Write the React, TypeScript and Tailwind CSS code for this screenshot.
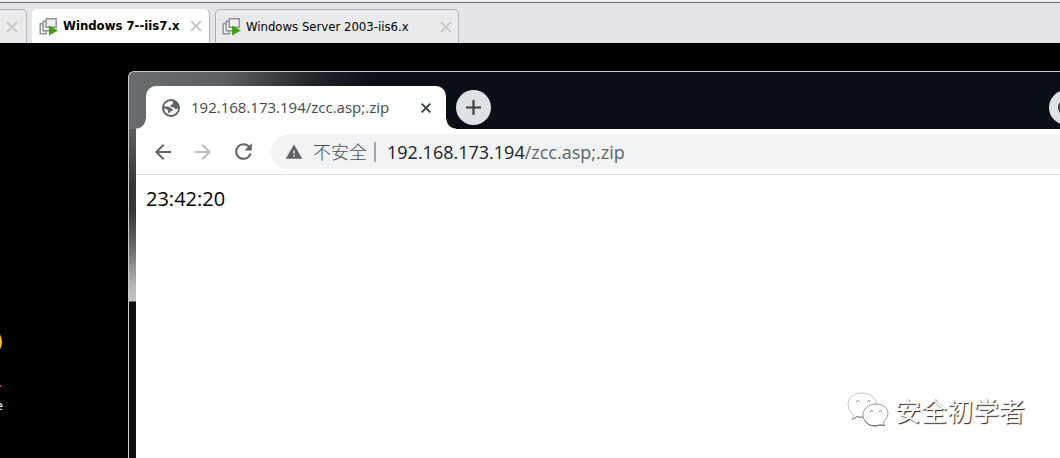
import { MdArrowBack, MdArrowForward, MdRefresh, MdWarning } from "react-icons/md";

function VmIcon() {
  return (
    <svg viewBox="0 0 19 19" className="size-[19px] shrink-0" aria-hidden="true">
      <g fill="#f0f1f2" stroke="#8d9093" strokeWidth="1.4">
        <path d="M1.200 6.700h6v10h-6z" />
        <path d="M4.200 4.200h7v9.500h-7z" />
        <path d="M7.200 1.700h10v8.500h-10z" />
      </g>
      <path d="M10 8.500l9 5-9 5z" fill="#43a012" />
    </svg>
  );
}

function GlobeIcon() {
  return (
    <svg viewBox="0 0 18 18" className="size-[18px] shrink-0" aria-hidden="true">
      <circle cx="9" cy="9" r="9" fill="#5f6368" />
      <path
        d="M10.500 2.200C6.500 1.400 3 4 2.100 7.600h4c1.500 0 1.600 1.600 3 1.700 1.200.1 1.800.5 1.800 1.500 0 1.200-1.300 1-2.200 1.700-.8.600-.6 1.500-1.700 1.500-1.300 0-1.200-1.500-.8-2.700L3 9.600H2.100C2.300 13 5.200 16 9 16c3.900 0 7-3.100 7-7l-1.600 1.200c-1 .4-1.500-.3-1.900-1.300-.6-1.300-2.400-.2-3.500-.8-1-.6-.8-2 .2-2.400 1.100-.4 1.700-.2 1.700-1.300z"
        fill="white"
      />
    </svg>
  );
}

function CloseMark() {
  return (
    <svg viewBox="0 0 12 12" className="size-3" aria-hidden="true">
      <path d="M1 1l10 10M11 1L1 11" stroke="#c6c8ca" strokeWidth="1.8" fill="none" />
    </svg>
  );
}

function VmTabs() {
  return (
    <nav aria-label="Virtual machines" className="flex h-[43px] shrink-0 items-end gap-[5px] overflow-hidden bg-[#e4e5e8] font-['DejaVu_Sans_Condensed','DejaVu_Sans',sans-serif] text-[13px] text-black shadow-[inset_0_2px_0_#f0f0f1,inset_0_3px_0_#6c6d70]">
      <div className="flex h-[34px] w-[27px] items-center justify-end rounded-tr-[5px] border-t border-r border-[#aeb0b3] bg-[#e9eaec] pr-2">
        <button type="button" aria-label="Close tab"><CloseMark /></button>
      </div>
      <div className="flex h-[34px] w-[178px] items-center rounded-t-[5px] border-r border-[#aeb0b3] bg-white px-[7px] font-bold">
        <button type="button" className="flex flex-1 items-center gap-[5px] whitespace-nowrap"><VmIcon />Windows 7--iis7.x</button>
        <button type="button" aria-label="Close tab"><CloseMark /></button>
      </div>
      <div className="flex h-[34px] w-[244px] items-center rounded-t-[5px] border-x border-t border-[#aeb0b3] bg-[#e9eaec] px-[6px]">
        <button type="button" className="flex flex-1 items-center gap-[5px] whitespace-nowrap"><VmIcon />Windows Server 2003-iis6.x</button>
        <button type="button" aria-label="Close tab"><CloseMark /></button>
      </div>
    </nav>
  );
}

function TabStrip() {
  return (
    <div className="flex h-[57px] items-end overflow-hidden pl-[10px]">
      <div className="relative flex h-[43px] w-[300px] shrink-0 items-center rounded-t-[10px] bg-white pr-[15px] pl-4">
        <span className="absolute bottom-0 -left-[10px] size-[10px] bg-[radial-gradient(circle_at_0_0,transparent_9px,white_10px)]" />
        <span className="absolute -right-[10px] bottom-0 size-[10px] bg-[radial-gradient(circle_at_100%_0,transparent_9px,white_10px)]" />
        <GlobeIcon />
        <span className="ml-[11px] flex-1 text-[15px] whitespace-nowrap text-[#45494d]">192.168.173.194/zcc.asp;.zip</span>
        <button type="button" aria-label="Close tab">
          <svg viewBox="0 0 10 10" className="size-[10px]" aria-hidden="true">
            <path d="M.7.7l8.600 8.600M9.300.7L.7 9.300" stroke="#3c4043" strokeWidth="1.9" fill="none" />
          </svg>
        </button>
      </div>
      <button type="button" aria-label="New tab" className="mb-1 ml-[10px] flex size-[35px] shrink-0 items-center justify-center rounded-full bg-[#dee1e6]">
        <svg viewBox="0 0 15 15" className="size-[15px]" aria-hidden="true">
          <path d="M7.500 0v15M0 7.500h15" stroke="#3c4043" strokeWidth="2.2" fill="none" />
        </svg>
      </button>
      <button type="button" aria-label="Search tabs" className="-mr-6 mb-1 ml-auto flex size-[35px] shrink-0 items-center justify-center rounded-full bg-[#dee1e6]">
        <span className="size-[17px] rounded-full bg-[#3c4043]" />
      </button>
    </div>
  );
}

function Toolbar() {
  return (
    <div className="flex h-[46px] items-center overflow-hidden border-b border-[#dcdde0] bg-white pl-[15px] text-[#5f6368]">
      <button type="button" aria-label="Back"><MdArrowBack className="size-6" /></button>
      <button type="button" aria-label="Forward" className="ml-4 text-[#b9bbbe]"><MdArrowForward className="size-6" /></button>
      <button type="button" aria-label="Reload" className="ml-4"><MdRefresh className="size-[25px]" /></button>
      <div className="ml-[15px] flex h-[35px] flex-1 items-center rounded-l-full bg-[#f1f3f4] pl-[14px] text-lg leading-6 whitespace-nowrap">
        <MdWarning className="size-[18px]" />
        <span className="ml-[10px] font-light text-[#4c5055]">不安全</span>
        <span className="ml-[7px] h-5 w-[2px] bg-[#a3a6a9]" />
        <span className="ml-[11px]"><span className="text-[#202124]">192.168.173.194</span>/zcc.asp;.zip</span>
      </div>
    </div>
  );
}

function Watermark() {
  return (
    <div className="flex items-center gap-[6px] font-['Noto_Sans_CJK_SC',sans-serif] text-[26px] leading-9 text-white [text-shadow:1px_1px_1px_#222]">
      <svg viewBox="0 0 42 36" className="h-9 w-[42px]" fill="white" stroke="#8b8b8b" strokeWidth="1" aria-hidden="true">
        <path d="M16 25c-2 .5-4 .3-6-.5L5.500 27.500l1-4.500C-3.500 15 1 1 14.500 1 23 1 29 6 29.500 12" stroke="#c4c4c4" />
        <path d="M5.500 27.500L10 24.500c2 .8 4 1 6 .5" fill="none" stroke="#777" />
        <path d="M37.500 33.500l-1-4c8-6 5-17.500-7.500-17.500-7.500 0-13 5-13 11 0 8 8.500 13 17 10z" stroke="#999" />
        <path d="M18 28.500c3 5.500 9 6.500 15 4.500l4.500 .5" fill="none" stroke="#666" />
        <path d="M9 10q1.500-3 3.500-.5M20 10q1.500-3 3.500-.5M23 20q1.500-3 3-.5M32 20q1.500-3 3-.5" fill="none" />
      </svg>
      <span>安全初学者</span>
    </div>
  );
}

export default function App() {
  return (
    <div className="flex min-h-screen flex-col overflow-hidden bg-black">
      <VmTabs />
      <div className="relative flex flex-1 pt-7 pl-32">
        <div className="absolute top-[284px] -left-[28px] size-[30px] rounded-full bg-[#f4bd2f]" />
        <div className="absolute top-[342px] left-0 h-[2px] w-px bg-[#c85a10]" />
        <span className="absolute top-[355px] right-full -mr-[3px] font-['DejaVu_Sans',sans-serif] text-[13px] leading-4 whitespace-nowrap text-white">e</span>
        <section className="flex min-w-0 flex-1 flex-col overflow-hidden rounded-tl-[6px] border-t border-l border-[#c9cbce] bg-[#0a0e15] bg-[linear-gradient(110deg,#6b6e71,#5d6063_90px,#25292e_170px,#0a0e15_230px),linear-gradient(to_bottom,#6b6e71,#5c5f62_57px,#32363a_115px,#34383b_140px,#66696b_175px,#b9babc_215px,#c2c3c5_229px,#0a0e15_230px)] bg-[length:100%_57px,7px_100%] bg-no-repeat pl-[7px] font-['Open_Sans','Noto_Sans_CJK_SC',sans-serif]">
          <TabStrip />
          <Toolbar />
          <main className="flex flex-1 flex-col bg-white pt-[9px] pr-[35px] pb-[30px] pl-[10px] text-xl leading-[30px] text-black">
            <p>23:42:20</p>
            <div className="mt-auto flex justify-end"><Watermark /></div>
          </main>
        </section>
      </div>
    </div>
  );
}
